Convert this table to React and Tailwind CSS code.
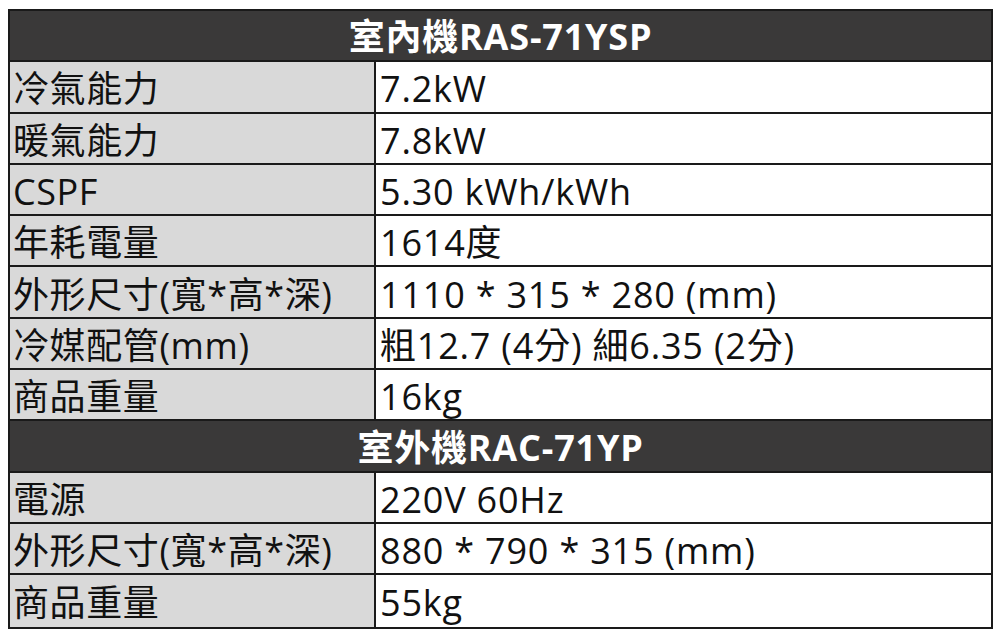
import React from "react";

const font = { fontFamily: '"Open Sans", "Noto Sans CJK TC", sans-serif' };

const indoor = [
  ["冷氣能力", "7.2kW"],
  ["暖氣能力", "7.8kW"],
  ["CSPF", "5.30 kWh/kWh"],
  ["年耗電量", "1614度"],
  ["外形尺寸(寬*高*深)", "1110 * 315 * 280 (mm)"],
  ["冷媒配管(mm)", "粗12.7 (4分) 細6.35 (2分)"],
  ["商品重量", "16kg"],
];
const outdoor = [
  ["電源", "220V 60Hz"],
  ["外形尺寸(寬*高*深)", "880 * 790 * 315 (mm)"],
  ["商品重量", "55kg"],
];

function Header({ children }) {
  return (
    <div className="flex h-[51.3px] items-center justify-center border-b-2 border-[#1a1a1a] bg-[#3a3939] pt-[3px] text-[36px] font-bold leading-none tracking-[0.8px] text-white">
      {children}
    </div>
  );
}

function Row({ a, b, last }) {
  return (
    <div className={"flex h-[51.3px] " + (last ? "" : "border-b-2 border-[#1a1a1a]")}>
      <div className="flex w-[366px] shrink-0 items-center border-r-2 border-[#1a1a1a] bg-[#d9d9d9] pl-[3px] pt-[5px] text-[36px] leading-none tracking-[0.6px] text-[#111] whitespace-nowrap">
        {a}
      </div>
      <div className="flex flex-1 items-center bg-white pl-[4px] pt-[5px] text-[36px] leading-none tracking-[0.8px] text-[#111] whitespace-nowrap">
        {b}
      </div>
    </div>
  );
}

export default function App() {
  return (
    <div className="h-[638px] w-[1000px] bg-white pl-[8px] pt-[9px]" style={font}>
      <div className="w-[985px] border-2 border-[#1a1a1a]">
        <Header>室內機RAS-71YSP</Header>
        {indoor.map(([a, b], i) => (
          <Row key={i} a={a} b={b} />
        ))}
        <Header>室外機RAC-71YP</Header>
        {outdoor.map(([a, b], i) => (
          <Row key={"o" + i} a={a} b={b} last={i === outdoor.length - 1} />
        ))}
      </div>
    </div>
  );
}
